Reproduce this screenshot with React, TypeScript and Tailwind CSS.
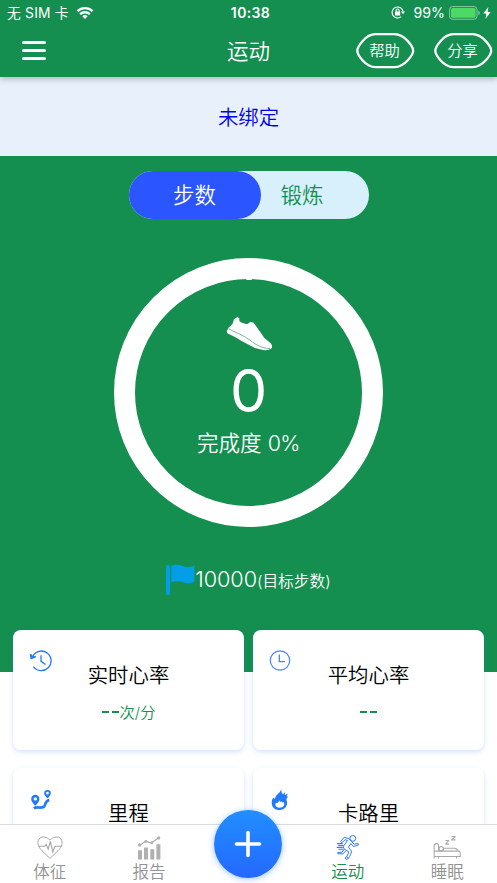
import type { ReactNode } from "react";

const blue = "#2079ff";

function Wifi() {
  return (
    <svg width="18" height="14" viewBox="0 0 18 14" fill="none" stroke="#fff" strokeWidth="2.3">
      <path d="M1.4 5.2a11 11 0 0 1 15.2 0" />
      <path d="M4.1 8.2a7.1 7.1 0 0 1 9.8 0" />
      <path d="M9 13 6.3 10.3a3.9 3.9 0 0 1 5.4 0Z" fill="#fff" stroke="none" />
    </svg>
  );
}

function RotationLock() {
  return (
    <svg width="14" height="13" viewBox="0 0 14 13" fill="none" stroke="#fff" strokeWidth="1.1">
      <path d="M10.2 10.7a5.5 5.5 0 1 1 1.9-5" />
      <path d="M9.9 5.6h4.1l-2 2.6Z" fill="#fff" stroke="none" />
      <rect x="4" y="5.5" width="5.2" height="4" rx=".5" fill="#fff" stroke="none" />
      <path d="M5.1 6V4.5a1.5 1.5 0 0 1 3 0V6" />
    </svg>
  );
}

function Battery() {
  return (
    <svg width="31" height="14" viewBox="0 0 31 14">
      <rect x=".6" y=".6" width="27.4" height="12.6" rx="2.8" fill="none" stroke="#8fc9a8" />
      <rect x="2" y="2" width="24.6" height="9.8" rx="1.6" fill="#4cd964" />
      <path d="M29.3 4.8q1.5.6 1.5 2.2t-1.5 2.2Z" fill="#8fc9a8" />
    </svg>
  );
}

function Shoe() {
  return (
    <svg width="47" height="35" viewBox="0 0 47 35">
      <path
        d="M.8 15 2.5 11.8 6.5 8 8 3.2 11.5 1 13.2 2.2 13.5 5.2Q18 8.8 22 7.8L24 6 27.3 6.4 30 10 36 18.4 38.3 22 45 27.6Q47 30.5 45.2 32.7 42 34.7 37 34L29 31.9 23.6 29.3 16 25.2 9 21.1 1.2 17.2Z"
        fill="#fff"
      />
      <path d="M2.5 12.7C10 17 17 18.8 24 24.1 31 30 38 32.7 44 32.4" fill="none" stroke="#148f50" strokeWidth=".6" />
    </svg>
  );
}

function Flag() {
  return (
    <svg width="29" height="31" viewBox="0 0 29 31" fill="#049ee8">
      <rect x="0" y="1" width="4" height="30" rx="2" />
      <path d="M5.3 2.2Q6.5.8 10 .8C15 .8 17 3.1 21.5 3.1Q25.5 3.1 28.4 1.2V17.5Q25.5 19.5 21 19.2C16.5 18.9 13 15.8 5.3 18.4Z" />
    </svg>
  );
}

function History() {
  return (
    <svg width="24" height="22" viewBox="0 0 24 22" fill="none" stroke={blue} strokeWidth="1.3">
      <path d="M3.6 6.4A9.8 9.8 0 1 1 4.4 16.6" />
      <path d="m1.6 4 .6 4.3 4.6-1.7" strokeWidth="1.6" />
      <path d="M2 4.5 3.5 6.3l2.7.4-3.5 1.3Z" fill={blue} strokeWidth=".5" />
      <path d="M12 5.3v6l4.5 3.2" />
    </svg>
  );
}

function Clock() {
  return (
    <svg width="22" height="22" viewBox="0 0 22 22" fill="none" stroke="#3e87f8" strokeWidth="1.2">
      <circle cx="11" cy="10.5" r="9.7" />
      <path d="M10.3 4.5v7.2h5.6" strokeWidth="1.3" />
    </svg>
  );
}

function Route() {
  return (
    <svg className="translate-y-0.5" width="24" height="22" viewBox="0 0 24 22" fill={blue}>
      <path fillRule="evenodd" d="M6.3 4.8a4.1 4.1 0 0 0-4.1 4.2c0 2.6 2.2 4.8 4.1 6.7 1.9-1.9 4.1-4.1 4.1-6.7a4.1 4.1 0 0 0-4.1-4.2Zm0 2.4a1.7 1.7 0 1 1 0 3.4 1.7 1.7 0 0 1 0-3.4Z" />
      <path fillRule="evenodd" d="M18.5 0a3.3 3.3 0 0 0-3.3 3.3c0 1.9 1.8 3.7 3.3 5.2 1.5-1.5 3.3-3.3 3.3-5.2A3.3 3.3 0 0 0 18.5 0Zm0 1.8a1.4 1.4 0 1 1 0 2.8 1.4 1.4 0 0 1 0-2.8Z" />
      <path d="M4.9 18.4C7.8 16 13.3 19.3 15.5 15.9c1.4-2.5.8-5 4.8-5.9" fill="none" stroke={blue} strokeWidth="2.7" />
    </svg>
  );
}

function Flame() {
  return (
    <svg className="ml-[2px] translate-y-px" width="18" height="22" viewBox="0 0 18 22">
      <path
        fill={blue}
        fillRule="evenodd"
        d="M10.5.3 8.7 3.3C6.5 5.5 4.1 6.9 3.9 10L2.3 8.4C1.3 10 .6 11.5.7 14c.2 4.4 3.2 7 7.8 7s7.5-2.8 7.6-7.2L15.4 10l1.6-2.6-1.3.2 1-3-3 1.6.4-3.1L12 5.2C10.3 4 10.3 2.4 10.5.3ZM8.4 11.2c.2 1.8 1.3 2 2.2 1.1.3 1.5 1.3 1.6 2.2.8 1.3 3.5-.2 5.6-4.3 5.6-3.5 0-5-2-3.5-5.1.6.8 1.3.6 1.9-.1.6-.6.9-1.4 1.5-2.3Z"
      />
    </svg>
  );
}

function HeartPulse() {
  return (
    <svg width="26" height="24" viewBox="0 0 26 24" fill="none" stroke="#a5a5a5" strokeWidth="1">
      <path d="M13 4.1C9-.3 3-.1 1.2 4.6.2 8.4 1.7 11.4 5 14.7l8 7.8 8-7.8c3.3-3.3 4.8-6.3 3.8-10.1C23-.1 17-.3 13 4.1Z" />
      <path d="M1.8 10.3h6l1.4-2 2 4.8 2.1-7.8 2.5 10.6 2.2-5.6h6.3" strokeWidth="1.1" />
    </svg>
  );
}

function Report() {
  return (
    <svg width="24" height="24" viewBox="0 0 24 24" fill="#b0b0b0">
      <path d="M1 14.2h4v9.2H1zM7 11.4h4v12H7zM13.3 13.3h4v10.1h-4zM19.4 8.2h4v15.2h-4z" />
      <path d="m2.7 9.2 6-3.9 5.4 1.6 7.7-5.2" fill="none" stroke="#a8a8a8" strokeWidth="1.2" />
      <circle cx="2.7" cy="9" r="1.7" />
      <circle cx="8.8" cy="5.5" r="1.4" />
      <circle cx="14.8" cy="6.8" r="1.5" />
      <circle cx="21.7" cy="1.9" r="1.6" />
    </svg>
  );
}

function Runner() {
  return (
    <svg width="24" height="26" viewBox="0 0 24 26" fill="none" stroke="#287dff" strokeWidth="1" strokeLinejoin="round">
      <circle cx="16.8" cy="3.4" r="2.9" />
      <path d="M13 3.7 8.2 2.3 4.5 6.5l1.4 1.3 3.2-3.1 2.4.8-3.6 5.2c-.9 1.7-.5 2.8 1 3.7l4 2.5-2.3 5 1.6 1.5c1.8-2.5 3-4.8 3.4-7.2l-3.2-4 2.5-3.7 2.6 3 5-1.5-.6-1.6-3.7.8L15.2 6.2Z" />
      <path d="m8.1 14.3-2.2 3H1.8v1.5h5.3l2.8-3M10.6 21.3l-1.5 1.9 2 1.4 1.4-1.7" />
      <path d="M1 8.6h5.7M2.3 10.5h5.1M.8 12.4h6M2.4 14.2h5" strokeWidth="1.1" />
    </svg>
  );
}

function Bed() {
  return (
    <svg width="28" height="24" viewBox="0 0 28 24" fill="none" stroke="#a8a8a8" strokeWidth="1.05" strokeLinejoin="round">
      <path d="M1.2 22.5V9.8a2.2 2.2 0 0 1 4.4 0v5.7M1.2 20.4h26v-3.5q0-1.8-2-1.8H2.8q-1.6 0-1.6 1.6ZM5.6 22.5v-2M23.5 22.5v-2" />
      <circle cx="8.2" cy="12.6" r="2.2" />
      <path d="M10.3 12.2h11.2q2.5 0 3.5 2.9M10.3 12.2v2.9" />
      <path d="M12.4 4.5h3.4L12.6 8.1H16M18.5.6h3.8l-3.6 3.3h3.8" strokeWidth="1.1" />
    </svg>
  );
}

function PillButton({ children }: { children: ReactNode }) {
  return (
    <button className="relative flex h-9 w-[59px] items-center justify-center text-[15.3px] leading-none">
      <svg className="absolute inset-0" width="59" height="36" viewBox="0 0 59 36" fill="none" stroke="#fff" strokeWidth="2.3">
        <path d="M19.5 1.2H38.5C49 1.2 57.2 14.2 57.2 17.7S49 34.2 38.5 34.2H19.5C9 34.2 1.3 21.2 1.3 17.7S9 1.2 19.5 1.2Z" />
      </svg>
      <span className="-ml-0.5">{children}</span>
    </button>
  );
}

function Card({ icon, title, children }: { icon: ReactNode; title: string; children?: ReactNode }) {
  return (
    <section className="h-[120px] rounded-lg bg-white pt-5 shadow-[0_2px_5px_rgba(32,121,255,0.2)]">
      <div className="h-[22px] pl-4">{icon}</div>
      <h2 className="-mt-[10px] text-center text-[20.4px] leading-7 text-black">{title}</h2>
      <p className="mt-[7px] flex h-[30px] items-center justify-center text-[15.3px] text-[#148f50]">{children}</p>
    </section>
  );
}

function Dashes() {
  return (
    <span className="flex gap-[3px]">
      <i className="h-[2px] w-[7px] bg-[#148f50]" />
      <i className="h-[2px] w-[7px] bg-[#148f50]" />
    </span>
  );
}

function Tab({ icon, label, active = false }: { icon: ReactNode; label: string; active?: boolean }) {
  return (
    <button className="flex w-[99.4px] flex-col items-center pt-[9.5px]">
      <span className="flex h-[26px] items-center">{icon}</span>
      <span className={active ? "text-[16.5px] leading-[22px] text-[#148f50]" : "text-[16.5px] leading-[22px] text-[#929292]"}>
        {label}
      </span>
    </button>
  );
}

export default function App() {
  return (
    <div className="flex h-[883px] w-[497px] flex-col overflow-hidden bg-white font-['Inter','Noto_Sans_CJK_SC',sans-serif] font-[350]">
      <header className="relative z-10 h-[77px] shrink-0 bg-[#148f50] text-white shadow-[0_2px_6px_rgba(0,0,0,0.25)]">
        <div className="grid h-[26px] grid-cols-3 items-center text-[13.8px] font-normal leading-none">
          <div className="flex items-center gap-[7px] pl-[7px]">
            <span className="whitespace-pre pt-px tracking-[0.2px]">无 SIM 卡</span>
            <Wifi />
          </div>
          <b className="pl-1 text-center text-[14px] font-semibold tracking-[0.35px]">10:38</b>
          <div className="flex items-center justify-end pr-1.5">
            <RotationLock />
            <span className="ml-[8px] mr-1 text-[14.2px]">99%</span>
            <Battery />
            <svg className="ml-[3px]" width="8" height="12" viewBox="0 0 8 12" fill="#fff">
              <path d="M5.4 0 .3 6.6h3L2.5 12l5.2-7.1H4.6Z" />
            </svg>
          </div>
        </div>
        <div className="grid h-[51px] grid-cols-[1fr_auto_1fr] items-center">
          <div className="-mt-0.5 flex flex-col gap-[4.6px] pl-[22px]">
            <i className="h-[3px] w-6 rounded-full bg-white" />
            <i className="h-[3px] w-6 rounded-full bg-white" />
            <i className="h-[3px] w-6 rounded-full bg-white" />
          </div>
          <h1 className="text-[21.5px] leading-none">运动</h1>
          <div className="-mt-0.5 flex justify-end gap-[19px] pr-1">
            <PillButton>帮助</PillButton>
            <PillButton>分享</PillButton>
          </div>
        </div>
      </header>

      <main className="min-h-0 flex-1 overflow-hidden">
        <div className="flex h-[79px] items-center justify-center bg-[#e8f0fb] pt-1 text-[20.4px] text-[#0000f0]">未绑定</div>

        <div className="flex h-[516px] flex-col items-center bg-[#148f50] pt-[15px] text-white">
          <div className="flex h-12 w-60 rounded-full bg-[#d7f0fc] text-[21.5px]">
            <button className="flex w-[132px] items-center justify-center rounded-full bg-[#2a55ff]">步数</button>
            <button className="flex w-[83px] items-center justify-center text-[#148f50]">锻炼</button>
          </div>

          <div className="mt-[38.5px] flex size-[269px] flex-col items-center rounded-full border-[21px] border-white">
            <i className="h-px w-1.5 rounded-b-full bg-white" />
            <div className="mt-[36px] ml-px">
              <Shoe />
            </div>
            <strong className="mt-[8px] text-[59px] font-[370] leading-[64px]">0</strong>
            <p className="mt-[4px] text-[21.5px] leading-8">
              完成度 <span className="tracking-[-0.6px]">0%</span>
            </p>
          </div>

          <div className="mt-[36.5px] flex h-8 items-center">
            <Flag />
            <span className="pt-0.5 text-[21.7px] leading-none tracking-[-0.1px]">10000</span>
            <span className="pt-[5px] text-[15.7px] leading-none">(目标步数)</span>
          </div>
        </div>

        <div className="-mt-[42px] grid grid-cols-2 gap-x-[9px] gap-y-[18px] px-[13px]">
          <Card icon={<History />} title="实时心率">
            <Dashes />
            <span className="ml-px pt-0.5">次/分</span>
          </Card>
          <Card icon={<Clock />} title="平均心率">
            <Dashes />
          </Card>
          <Card icon={<Route />} title="里程" />
          <Card icon={<Flame />} title="卡路里" />
        </div>
      </main>

      <footer className="relative flex h-[59px] shrink-0 border-t border-[#dcdcdc] bg-white">
        <Tab icon={<HeartPulse />} label="体征" />
        <Tab icon={<Report />} label="报告" />
        <div className="w-[99.4px]" />
        <Tab icon={<Runner />} label="运动" active />
        <Tab icon={<Bed />} label="睡眠" />
        <button className="absolute -top-[15px] left-[214px] flex size-[68px] items-center justify-center rounded-full bg-linear-to-b from-[#238eff] to-[#2568ff] shadow-[0_1px_6px_rgba(32,121,255,0.45)]">
          <svg width="28" height="28" viewBox="0 0 28 28" stroke="#fff" strokeWidth="3.6" strokeLinecap="round">
            <path d="M14 2.5v23M2.5 14h23" />
          </svg>
        </button>
      </footer>
    </div>
  );
}
